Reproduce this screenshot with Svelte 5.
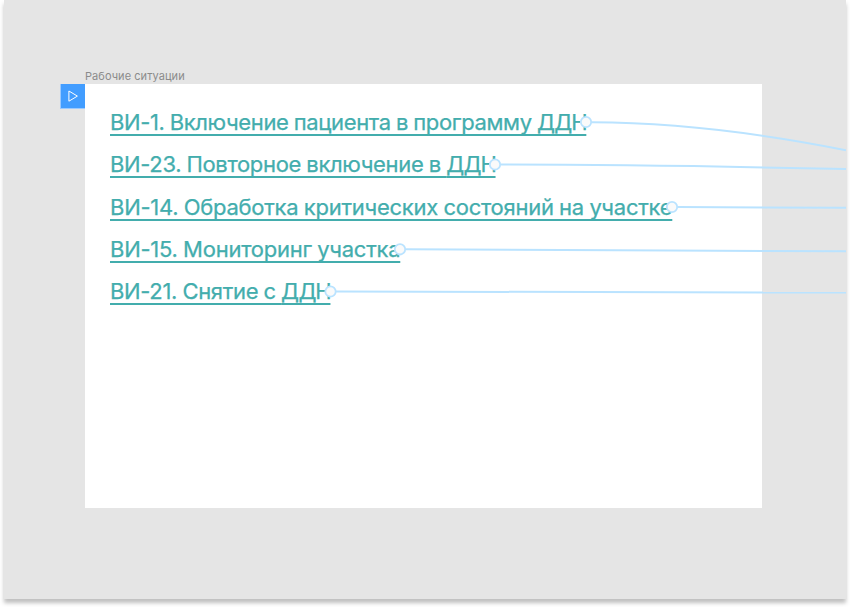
<script>
  const links = [
    { text: 'ВИ-1. Включение пациента в программу ', tail: 'ДДН', spacing: -0.38, x: 586, y: 122, path: 'M592 122.3 C676 122.5 762 133.5 846 150.2' },
    { text: 'ВИ-23. Повторное включение в ', tail: 'ДДН', spacing: -0.34, x: 495, y: 164.5, path: 'M501 164.6 C620 164.6 720 166.3 846 169.1' },
    { text: 'ВИ-14. Обработка критических состояний на участке', tail: '', spacing: -0.26, x: 672, y: 207, path: 'M678 207 L846 207.8' },
    { text: 'ВИ-15. Мониторинг участка', tail: '', spacing: -0.25, x: 400, y: 249.3, path: 'M406 249.2 C550 249.4 700 251.2 846 251.3' },
    { text: 'ВИ-21. Снятие с ', tail: 'ДДН', spacing: -0.33, x: 330.5, y: 291.5, path: 'M336 291.5 L846 292.6' }
  ];
</script>

<div class="page">
<main class="canvas">
  <section class="frame-group">
    <div class="title">Рабочие ситуации</div>
    <div class="row">
      <div class="play">
        <svg width="25" height="24" viewBox="0 0 25 24">
          <path d="M8.9 7 L17.4 12.1 L8.9 17.2 Z" fill="none" stroke="#fff" stroke-width="1" />
        </svg>
      </div>
      <div class="frame">
        {#each links as link}
          <div class="item"><a href="#flow" style:letter-spacing="{link.spacing}px">{link.text}{#if link.tail}<span class="tail">{link.tail}</span>{/if}</a></div>
        {/each}
      </div>
    </div>
  </section>
  <svg class="wires" width="842" height="599" viewBox="4 0 842 599">
    {#each links as link}
      <path d={link.path} fill="none" stroke="#bae3ff" stroke-width="2" />
      <circle cx={link.x} cy={link.y} r="5.2" fill="#fafafa" stroke="#bae3ff" stroke-width="1.8" />
    {/each}
  </svg>
</main>
</div>

<style>
  :global(body) {
    margin: 0;
    background: #fff;
  }
  .page {
    height: 607px;
    overflow: hidden;
  }
  .canvas {
    position: relative;
    box-sizing: border-box;
    width: 842.5px;
    height: 599px;
    margin-left: 3.5px;
    padding: 68px 0 0 56.5px;
    background: #e5e5e5;
    box-shadow: 0 4px 4px rgba(0, 0, 0, 0.25);
    font-family: Inter, "Liberation Sans", sans-serif;
  }
  .title {
    height: 16px;
    padding-left: 25px;
    font-size: 11px;
    line-height: 16px;
    letter-spacing: 0.06px;
    color: #8b8b8b;
    white-space: nowrap;
  }
  .row {
    display: flex;
    align-items: flex-start;
  }
  .play {
    box-sizing: border-box;
    width: 25px;
    height: 25px;
    border: solid #9ccaff;
    border-width: 0 0 1px 1px;
    background: #429dff;
  }
  .play svg {
    display: block;
    margin-left: -1px;
  }
  .frame {
    box-sizing: border-box;
    width: 677px;
    height: 423.5px;
    padding: 21.1px 0 0 25px;
    background: #fff;
  }
  .item {
    height: 42.3px;
    line-height: 34px;
    font-size: 22px;
    font-weight: 400;
    white-space: nowrap;
  }
  a {
    color: #43adad;
    -webkit-text-stroke: 0.25px #43adad;
    text-decoration: underline;
    text-decoration-thickness: 2px;
    text-underline-offset: 4px;
    text-decoration-skip-ink: none;
    word-spacing: -0.5px;
  }
  .tail {
    letter-spacing: -1.2px;
  }
  .wires {
    position: absolute;
    left: 0.5px;
    top: 0;
  }
</style>
